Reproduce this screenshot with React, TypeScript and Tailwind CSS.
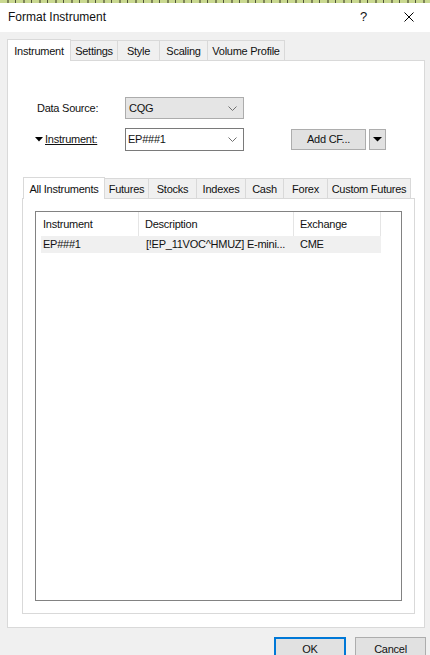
import React from 'react';

const topTabs = ['Instrument', 'Settings', 'Style', 'Scaling', 'Volume Profile'];
const topWidths = [64, 47, 42, 48, 77];

const symbolTabs = ['All Instruments', 'Futures', 'Stocks', 'Indexes', 'Cash', 'Forex', 'Custom Futures'];
const symbolWidths = [82, 44, 48, 49, 38, 44, 83];

function Chevron() {
  return (
    <svg width="9" height="5" viewBox="0 0 9 5" className="shrink-0">
      <polyline points="0.5,0.5 4.5,4.5 8.5,0.5" fill="none" stroke="#707070" strokeWidth="1" />
    </svg>
  );
}

function TabStrip({ labels, widths }: { labels: string[]; widths: number[] }) {
  return (
    <div className="flex items-end relative z-10">
      {labels.map((label, i) =>
        i === 0 ? (
          <div
            key={label}
            style={{ width: widths[i] }}
            className="h-[22px] -mb-px bg-white border border-b-0 border-[#d9d9d9] flex items-start pt-[3px] justify-center"
          >
            {label}
          </div>
        ) : (
          <div
            key={label}
            style={{ width: widths[i] }}
            className="h-[20px] bg-[#f0f0f0] border border-l-0 border-b-0 border-[#d9d9d9] flex items-center justify-center pt-[1px]"
          >
            {label}
          </div>
        )
      )}
    </div>
  );
}

export default function App() {
  return (
    <div className="w-[430px] h-[655px] overflow-hidden bg-[#f0f0f0] text-[11px] tracking-[-0.25px] text-[#111] font-['Liberation_Sans',Arial,sans-serif]">
      {/* edge of the window behind */}
      <div className="h-[3px] bg-[repeating-linear-gradient(90deg,#c9d890_0px,#c9d890_7px,#7d8456_7px,#7d8456_9px,#c9d890_9px,#c9d890_15px,#4f5438_15px,#4f5438_16px)]" />

      {/* title bar */}
      <div className="h-[29px] bg-white flex items-center pl-[8px]">
        <span className="text-[12px] tracking-normal -mt-[2px]">Format Instrument</span>
        <span className="ml-auto text-[13px] mr-[37px] -mt-[2px]">?</span>
        <svg width="10" height="10" viewBox="0 0 10 10" className="mr-[16px] -mt-[2px]">
          <path d="M0.5 0.5 L9.5 9.5 M9.5 0.5 L0.5 9.5" stroke="#000" strokeWidth="1" />
        </svg>
      </div>

      <div className="pt-[7px] pl-[7px]">
        <TabStrip labels={topTabs} widths={topWidths} />

        <div className="w-[418px] h-[568px] bg-white border border-[#d9d9d9]">
          {/* data source */}
          <div className="mt-[36px] pl-[27px] flex items-center h-[22px]">
            <span className="w-[90px] pl-[2px]">Data Source:</span>
            <div className="w-[119px] h-[22px] bg-[#e5e5e5] border border-[#acacac] flex items-center pl-[3px] pr-[6px] justify-between">
              <span>CQG</span>
              <Chevron />
            </div>
          </div>

          {/* instrument */}
          <div className="mt-[9px] pl-[27px] flex items-center h-[23px]">
            <span className="w-[90px] flex items-center">
              <svg width="8" height="5" viewBox="0 0 8 5" className="mr-[2px]">
                <polygon points="0,0 8,0 4,4.5" fill="#000" />
              </svg>
              <span className="underline">Instrument:</span>
            </span>
            <div className="w-[119px] h-[23px] bg-white border border-[#7a7a7a] flex items-center pl-[2px] pr-[6px] justify-between">
              <span>EP###1</span>
              <Chevron />
            </div>
            <div className="ml-[47px] w-[75px] h-[21px] bg-[#e1e1e1] border border-[#adadad] flex items-center justify-center">
              Add CF...
            </div>
            <div className="ml-[3px] w-[17px] h-[21px] bg-[#e1e1e1] border border-[#adadad] flex items-center justify-center">
              <svg width="9" height="5" viewBox="0 0 9 5">
                <polygon points="0,0 9,0 4.5,4.5" fill="#000" />
              </svg>
            </div>
          </div>

          {/* instrument lookup */}
          <div className="mt-[26px] ml-[14px]">
            <div className="pl-[1px]">
              <TabStrip labels={symbolTabs} widths={symbolWidths} />
            </div>
            <div className="w-[393px] h-[416px] bg-white border border-[#d9d9d9] pt-[12px] pl-[12px]">
              <div className="w-[367px] h-[390px] border border-[#828282]">
                <div className="flex h-[24px] items-center">
                  <div className="w-[103px] h-full pl-[7px] flex items-center border-r border-[#e5e5e5]">Instrument</div>
                  <div className="w-[155px] h-full pl-[6px] flex items-center border-r border-[#e5e5e5]">Description</div>
                  <div className="w-[87px] h-full pl-[6px] flex items-center border-r border-[#e5e5e5]">Exchange</div>
                </div>
                <div className="ml-[5px] w-[340px] h-[17px] bg-[#f0f0f0] flex items-center">
                  <span className="w-[98px] pl-[2px]">EP###1</span>
                  <span className="w-[155px] pl-[7px] whitespace-nowrap">[!EP_11VOC^HMUZ] E-mini...</span>
                  <span className="pl-[6px]">CME</span>
                </div>
              </div>
            </div>
          </div>
        </div>

        {/* dialog buttons */}
        <div className="flex mt-[9px] pl-[267px]">
          <div className="w-[72px] h-[24px] bg-[#e1e1e1] border-2 border-[#0078d7] flex items-center justify-center">OK</div>
          <div className="ml-[9px] w-[71px] h-[24px] bg-[#e1e1e1] border border-[#adadad] flex items-center justify-center">Cancel</div>
        </div>
      </div>
    </div>
  );
}
